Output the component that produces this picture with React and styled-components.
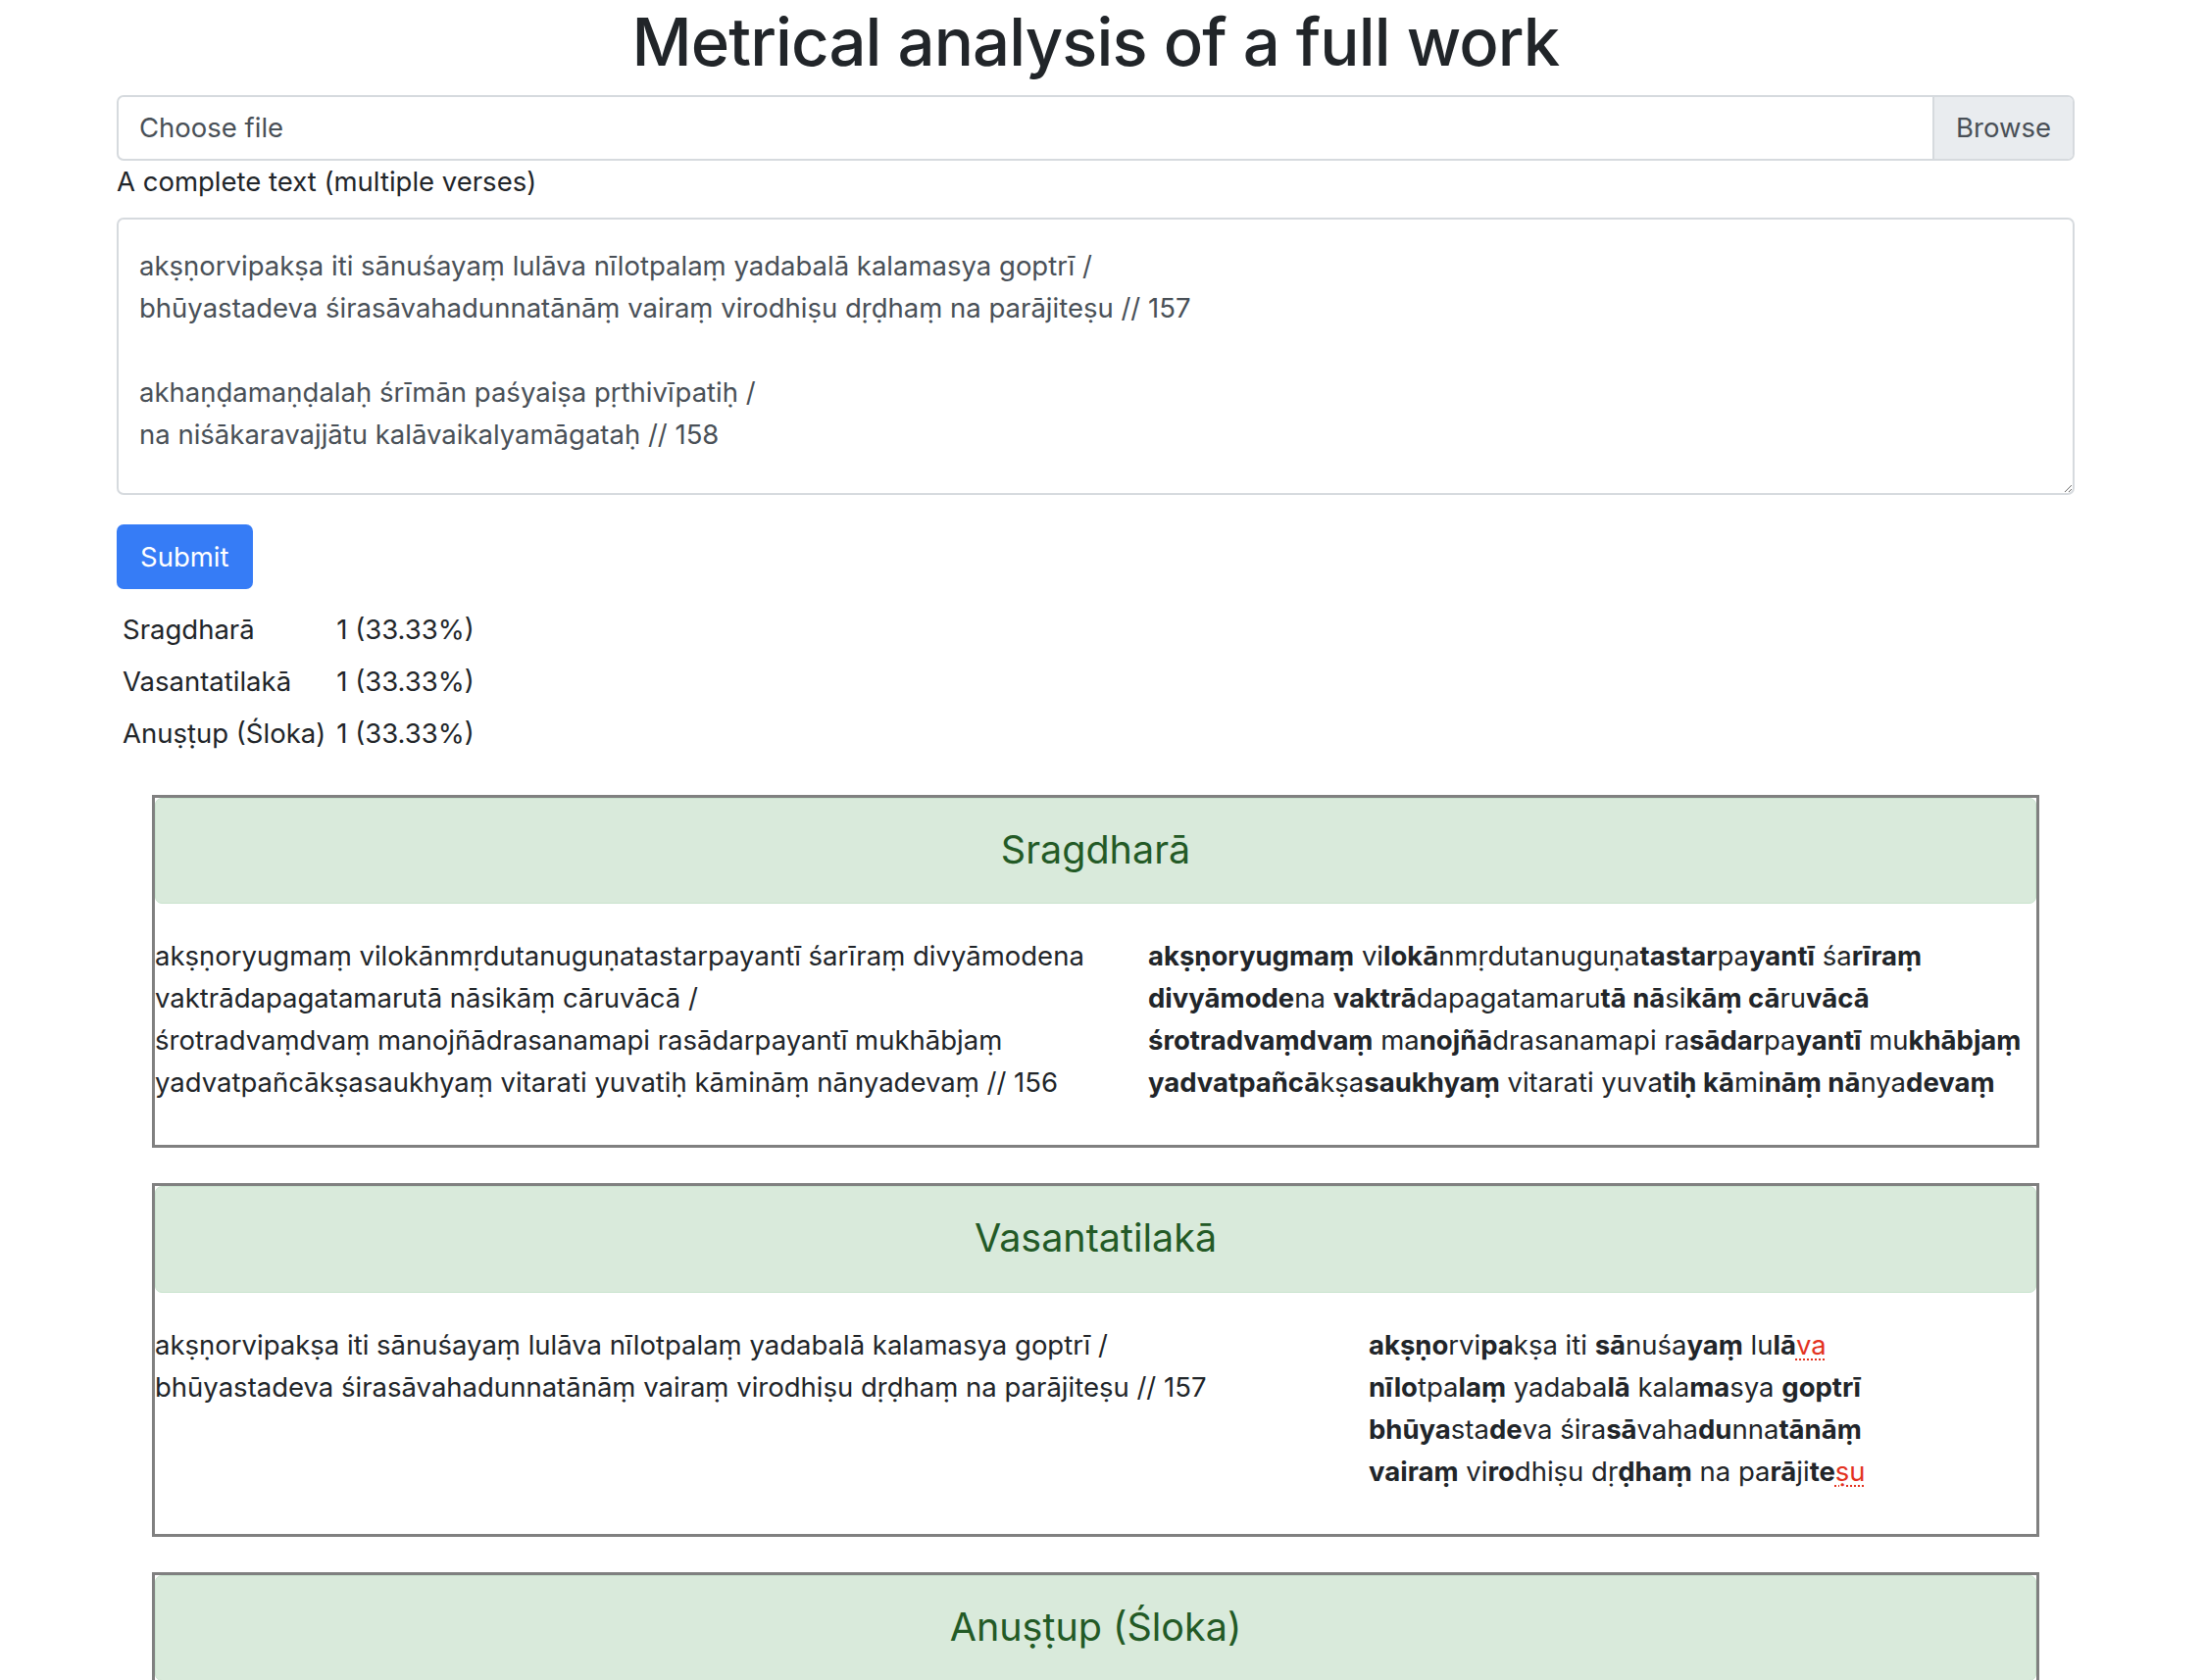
import React from "react"
import styled, { createGlobalStyle } from "styled-components"

const GlobalStyle = createGlobalStyle`
    body{
        margin: 0;
        background: #ffffff;
        font-family: Inter, "Noto Sans", "Liberation Sans", sans-serif;
        font-size: 27.5px;
        line-height: 43px;
        color: #212529;
    }
`

// *...* is a heavy syllable, ~...~ a syllable that breaks the metre
const results = [
    {
        metre: "Sragdharā",
        lead: 1013,
        verse: [
            "akṣṇoryugmaṃ vilokānmṛdutanuguṇatastarpayantī śarīraṃ divyāmodena vaktrādapagatamarutā nāsikāṃ cāruvācā /",
            "śrotradvaṃdvaṃ manojñādrasanamapi rasādarpayantī mukhābjaṃ yadvatpañcākṣasaukhyaṃ vitarati yuvatiḥ kāmināṃ nānyadevaṃ // 156",
        ],
        scan: [
            "*akṣṇoryugmaṃ* vi*lokā*nmṛdutanuguṇa*tastar*pa*yantī* śa*rīraṃ*",
            "*divyāmode*na *vaktrā*dapagatamaru*tā nā*si*kāṃ cā*ru*vācā*",
            "*śrotradvaṃdvaṃ* ma*nojñā*drasanamapi ra*sādar*pa*yantī* mu*khābjaṃ*",
            "*yadvatpañcā*kṣa*saukhyaṃ* vitarati yuva*tiḥ kā*mi*nāṃ nā*nya*devaṃ*",
        ],
    },
    {
        metre: "Vasantatilakā",
        lead: 1238,
        verse: [
            "akṣṇorvipakṣa iti sānuśayaṃ lulāva nīlotpalaṃ yadabalā kalamasya goptrī /",
            "bhūyastadeva śirasāvahadunnatānāṃ vairaṃ virodhiṣu dṛḍhaṃ na parājiteṣu // 157",
        ],
        scan: [
            "*akṣṇo*rvi*pa*kṣa iti *sā*nuśa*yaṃ* lu*lā*~va~",
            "*nīlo*tpa*laṃ* yadaba*lā* kala*ma*sya *goptrī*",
            "*bhūya*sta*de*va śira*sā*vaha*du*nna*tānāṃ*",
            "*vairaṃ* vi*ro*dhiṣu dṛ*ḍhaṃ* na pa*rā*ji*te*~ṣu~",
        ],
    },
    {
        metre: "Anuṣṭup (Śloka)",
        lead: 1200,
        verse: [
            "akhaṇḍamaṇḍalaḥ śrīmān paśyaiṣa pṛthivīpatiḥ /",
            "na niśākaravajjātu kalāvaikalyamāgataḥ // 158",
        ],
        scan: [
            "*akhaṇ*ḍa*maṇ*ḍa*laḥ śrī*mān*",
            "*paś*yai*ṣa* pṛthi*vī*pa*tiḥ*",
            "na ni*śā*kara*vaj*jā*tu*",
            "ka*lā*vai*kal*ya*mā*ga*taḥ*",
        ],
    },
]

const textareaValue = [
    "akṣṇorvipakṣa iti sānuśayaṃ lulāva nīlotpalaṃ yadabalā kalamasya goptrī /",
    "bhūyastadeva śirasāvahadunnatānāṃ vairaṃ virodhiṣu dṛḍhaṃ na parājiteṣu // 157",
    "",
    "akhaṇḍamaṇḍalaḥ śrīmān paśyaiṣa pṛthivīpatiḥ /",
    "na niśākaravajjātu kalāvaikalyamāgataḥ // 158",
].join("\n")

function Scanned({ line }){
    const parts = line.split(/(\*[^*]+\*|~[^~]+~)/).filter(p => p !== "")
    return parts.map((p, i) => {
        if(p.startsWith("*")) return <Heavy key={i}>{p.slice(1, -1)}</Heavy>
        if(p.startsWith("~")) return <Fault key={i}>{p.slice(1, -1)}</Fault>
        return <span key={i}>{p}</span>
    })
}

export default function App(){
    const total = results.length
    return(
        <>
        <GlobalStyle />
        <Page>
            <Title>Metrical analysis of a full work</Title>
            <FileInput>
                <FileLabel>Choose file</FileLabel>
                <Browse>Browse</Browse>
            </FileInput>
            <FieldLabel htmlFor="fulltext">A complete text (multiple verses)</FieldLabel>
            <TextBox id="fulltext" defaultValue={textareaValue} spellCheck={false} />
            <SubmitButton type="button">Submit</SubmitButton>
            <Stats>
                <tbody>
                    {results.map(r => <tr key={r.metre}>
                        <td>{r.metre}</td>
                        <td>1 ({(100 / total).toFixed(2)}%)</td>
                    </tr>)}
                </tbody>
            </Stats>
            {results.map(r => <Card key={r.metre}>
                <CardHeader>{r.metre}</CardHeader>
                <CardBody $lead={r.lead}>
                    <Verse>
                        {r.verse.map((v, i) => <React.Fragment key={i}>{v}{i < r.verse.length - 1 && <br />}</React.Fragment>)}
                    </Verse>
                    <Scansion>
                        {r.scan.map((s, i) => <div key={i}><Scanned line={s} /></div>)}
                    </Scansion>
                </CardBody>
            </Card>)}
        </Page>
        </>
    )
}

const Page = styled.div`
    padding: 0 132px 60px 119px;
`

const Title = styled.h1`
    margin: 0 0 11px;
    text-align: center;
    font-size: 67px;
    font-weight: 500;
    line-height: 86px;
    letter-spacing: -0.9px;
    color: #212529;
`

const FileInput = styled.div`
    display: flex;
    height: 67px;
    box-sizing: border-box;
    border: 2px solid #d6dade;
    border-radius: 7px;
    overflow: hidden;
    color: #495057;
`

const FileLabel = styled.div`
    flex: 1;
    display: flex;
    align-items: center;
    padding: 0 21px;
`

const Browse = styled.div`
    display: flex;
    align-items: center;
    padding: 0 22px;
    background-color: #e9ecef;
    border-left: 2px solid #d6dade;
`

const FieldLabel = styled.label`
    display: block;
    margin-bottom: 15px;
`

const TextBox = styled.textarea`
    display: block;
    width: 100%;
    height: 283px;
    box-sizing: border-box;
    margin: 0 0 30px;
    padding: 26px 21px 10px;
    font-family: inherit;
    font-size: 27.5px;
    line-height: 43px;
    color: #495057;
    border: 2px solid #d6dade;
    border-radius: 7px;
    resize: vertical;
    outline: none;
`

const SubmitButton = styled.button`
    display: block;
    height: 66px;
    padding: 0 24px;
    border: none;
    border-radius: 7px;
    background-color: #367cf6;
    color: #ffffff;
    font-family: inherit;
    font-size: 27.5px;
`

const Stats = styled.table`
    margin-top: 15px;
    border-collapse: collapse;

    td{
        padding: 5px 5px 5px 6px;
        white-space: nowrap;
    }
`

const Card = styled.div`
    margin: 36px 36px 0;
    border: 3px solid #808080;
`

const CardHeader = styled.h4`
    margin: 0;
    padding: 29px 30px 30px;
    text-align: center;
    font-size: 39.5px;
    font-weight: 400;
    line-height: 1.2;
    color: #235a26;
    background-color: #d9eadb;
    border: 1.5px solid #c9e3ce;
    border-radius: 7px;
`

const CardBody = styled.div`
    display: grid;
    grid-template-columns: ${p => p.$lead}px auto;
    padding: 32px 0 42px;
`

const Verse = styled.div`
    padding-right: 40px;
`

const Scansion = styled.div`
    white-space: nowrap;
`

const Heavy = styled.span`
    font-weight: 700;
`

const Fault = styled.span`
    color: #e3321f;
    text-decoration: underline dotted #e3321f;
    text-decoration-thickness: 2px;
    text-underline-offset: 5px;
`
